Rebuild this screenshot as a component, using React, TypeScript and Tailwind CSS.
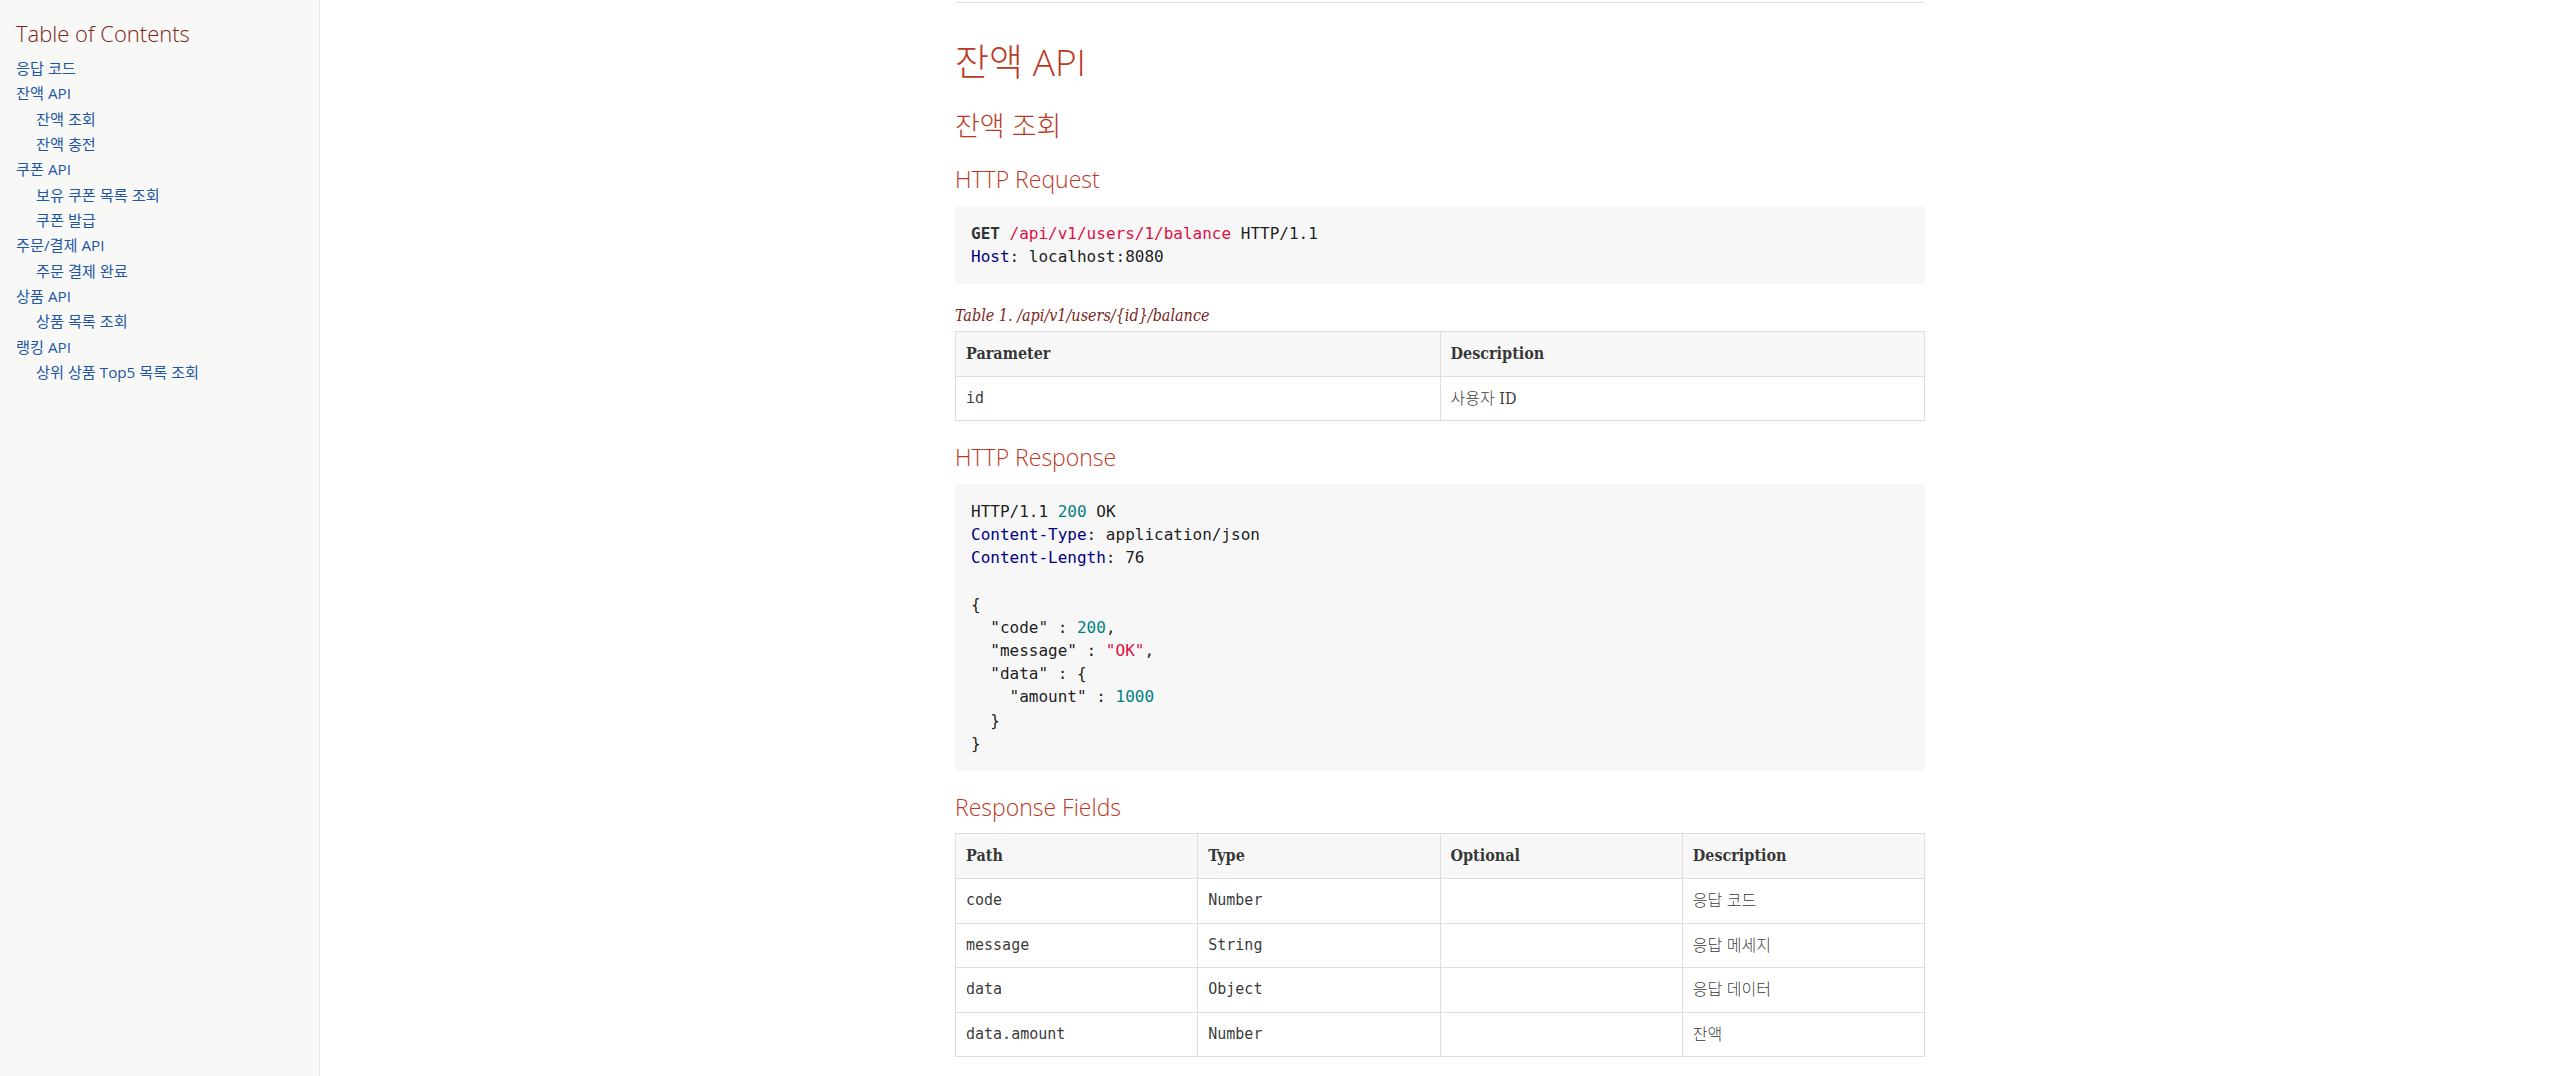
import React from 'react';

const toc = [
  { label: '응답 코드', level: 1 },
  { label: '잔액 API', level: 1 },
  { label: '잔액 조회', level: 2 },
  { label: '잔액 충전', level: 2 },
  { label: '쿠폰 API', level: 1 },
  { label: '보유 쿠폰 목록 조회', level: 2 },
  { label: '쿠폰 발급', level: 2 },
  { label: '주문/결제 API', level: 1 },
  { label: '주문 결제 완료', level: 2 },
  { label: '상품 API', level: 1 },
  { label: '상품 목록 조회', level: 2 },
  { label: '랭킹 API', level: 1 },
  { label: '상위 상품 Top5 목록 조회', level: 2 },
];

const fields = [
  { path: 'code', type: 'Number', desc: '응답 코드' },
  { path: 'message', type: 'String', desc: '응답 메세지' },
  { path: 'data', type: 'Object', desc: '응답 데이터' },
  { path: 'data.amount', type: 'Number', desc: '잔액' },
];

const heading = "font-['Open_Sans','DejaVu_Sans','Noto_Sans_CJK_KR',sans-serif] font-light text-[#ba3925]";
const mono = "font-['DejaVu_Sans_Mono','Liberation_Mono',monospace]";
const serif = "font-['DejaVu_Serif_Condensed','DejaVu_Serif','Noto_Sans_CJK_KR',serif]";

function Sidebar() {
  return (
    <div className="w-[320px] shrink-0 h-full bg-[#f8f8f7] border-r border-[#e7e7e9] px-4 pt-[22px] font-['Open_Sans','DejaVu_Sans','Noto_Sans_CJK_KR',sans-serif]">
      <div className="text-[22px] leading-[22px] font-light text-[#7a2518] mb-[14px]">Table of Contents</div>
      <ul className="text-[15.2px]">
        {toc.map((t) => (
          <li
            key={t.label}
            className={`leading-[20.27px] mt-[5.07px] text-[#2156a5] ${t.level === 2 ? 'pl-[20px]' : ''}`}
          >
            {t.label}
          </li>
        ))}
      </ul>
    </div>
  );
}

function CodeBlock({ children }: { children: React.ReactNode }) {
  return (
    <pre className={`${mono} bg-[#f7f7f8] rounded-[4px] p-4 text-[16px] leading-[23.2px] text-[rgba(0,0,0,0.9)] whitespace-pre`}>
      {children}
    </pre>
  );
}

const Attr = ({ children }: { children: React.ReactNode }) => <span className="text-[#000080]">{children}</span>;
const Num = ({ children }: { children: React.ReactNode }) => <span className="text-[#008080]">{children}</span>;
const Str = ({ children }: { children: React.ReactNode }) => <span className="text-[#dd1144]">{children}</span>;

function Th({ children }: { children: React.ReactNode }) {
  return (
    <th className={`${serif} text-left font-bold text-[16px] leading-[25.6px] px-[10px] py-[9px] border border-[#dedede] text-[rgba(0,0,0,0.8)]`}>
      {children}
    </th>
  );
}

function Td({ children, code }: { children?: React.ReactNode; code?: boolean }) {
  return (
    <td
      className={`${code ? `${mono} text-[15px]` : `${serif} text-[16px] font-light`} leading-[25.6px] px-[10px] py-[9px] border border-[#dedede] text-[rgba(0,0,0,0.8)]`}
    >
      {children}
    </td>
  );
}

export default function App() {
  return (
    <div className="flex w-full h-[1076px] overflow-hidden bg-white">
      <Sidebar />
      <div className="flex-1">
        <div className="max-w-[1000px] mx-auto px-[15px]">
          <div className="mt-[2px] h-px bg-[#e2e2e4]" />

          <h2 className={`${heading} text-[37px] leading-[37px] mt-[40px]`}>잔액 API</h2>
          <h3 className={`${heading} text-[27px] leading-[27px] mt-[32px]`}>잔액 조회</h3>
          <h4 className={`${heading} text-[23px] leading-[23px] mt-[29px]`}>HTTP Request</h4>

          <div className="mt-[15px]">
            <CodeBlock>
              <span className="font-bold text-[#333]">GET</span> <Str>/api/v1/users/1/balance</Str> HTTP/1.1
              {'\n'}
              <Attr>Host</Attr>: localhost:8080
            </CodeBlock>
          </div>

          <div className={`${serif} italic text-[16px] leading-[20px] text-[#7a2518] mt-[22px]`}>
            Table 1. /api/v1/users/{'{id}'}/balance
          </div>
          <table className="w-full table-fixed border-collapse mt-[4.6px]">
            <thead>
              <tr className="bg-[#f7f8f7]">
                <Th>Parameter</Th>
                <Th>Description</Th>
              </tr>
            </thead>
            <tbody>
              <tr>
                <Td code>id</Td>
                <Td>사용자 ID</Td>
              </tr>
            </tbody>
          </table>

          <h4 className={`${heading} text-[23px] leading-[23px] mt-[25px]`}>HTTP Response</h4>
          <div className="mt-[14.5px]">
            <CodeBlock>
              HTTP/1.1 <Num>200</Num> OK{'\n'}
              <Attr>Content-Type</Attr>: application/json{'\n'}
              <Attr>Content-Length</Attr>: 76{'\n'}
              {'\n'}
              {'{\n'}
              {'  "code" : '}<Num>200</Num>{',\n'}
              {'  "message" : '}<Str>"OK"</Str>{',\n'}
              {'  "data" : {\n'}
              {'    "amount" : '}<Num>1000</Num>{'\n'}
              {'  }\n'}
              {'}'}
            </CodeBlock>
          </div>

          <h4 className={`${heading} text-[23px] leading-[23px] mt-[25.5px]`}>Response Fields</h4>
          <table className="w-full table-fixed border-collapse mt-[14px]">
            <thead>
              <tr className="bg-[#f7f8f7]">
                <Th>Path</Th>
                <Th>Type</Th>
                <Th>Optional</Th>
                <Th>Description</Th>
              </tr>
            </thead>
            <tbody>
              {fields.map((f) => (
                <tr key={f.path}>
                  <Td code>{f.path}</Td>
                  <Td code>{f.type}</Td>
                  <Td />
                  <Td>{f.desc}</Td>
                </tr>
              ))}
            </tbody>
          </table>
        </div>
      </div>
    </div>
  );
}
